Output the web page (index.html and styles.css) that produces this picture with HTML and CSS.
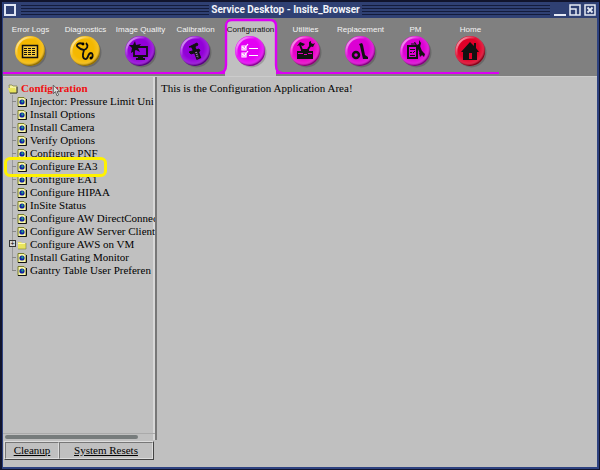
FILE: index.html
```html
<!DOCTYPE html>
<html lang="en">
<head>
<meta charset="utf-8">
<title>Service Desktop - Insite_Browser</title>
<link rel="stylesheet" href="styles.css">
</head>
<body>
<svg class="defs" aria-hidden="true">
  <defs>
    <radialGradient id="shade" cx="45%" cy="42%" r="56%">
      <stop offset="0.6" stop-color="#fff" stop-opacity="0"/>
      <stop offset="0.85" stop-color="#fff" stop-opacity="0.12"/>
      <stop offset="1" stop-color="#000" stop-opacity="0.4"/>
    </radialGradient>
    <linearGradient id="gloss" x1="0" y1="0" x2="0.8" y2="0.8">
      <stop offset="0" stop-color="#fff" stop-opacity="0.9"/>
      <stop offset="0.45" stop-color="#fff" stop-opacity="0"/>
    </linearGradient>
    <g id="ball">
      <circle cx="17.500" cy="17.500" r="15" fill="#000" opacity="0.18"/>
      <circle cx="16" cy="16" r="15" fill="currentColor"/>
      <circle cx="16" cy="16" r="15" fill="url(#shade)"/>
      <circle cx="16" cy="16" r="13.500" fill="none" stroke="url(#gloss)" stroke-width="2"/>
    </g>
    <symbol id="page" viewBox="0 0 10 10">
      <path d="M1 .5h6l2 2v7H1z" fill="#fbf8a8" stroke="#777a2c"/>
      <path d="M9.500 2v7.500H1" fill="none" stroke="#111"/>
      <circle cx="5" cy="5" r="2.600" fill="#1020a0"/>
      <path d="M4 4l2-1 .5 2L5 6z" fill="#1d9f88"/>
    </symbol>
    <symbol id="folder" viewBox="0 0 10 10">
      <path d="M1 2h3l1 1h4v6H1z" fill="#e8e45c"/>
      <path d="M1 3.500h7" stroke="#fffbb0"/>
      <path d="M1 9h8V3" fill="none" stroke="#8a8a45" stroke-width=".7"/>
    </symbol>
    <symbol id="folder-open" viewBox="0 0 10 10">
      <path d="M1 1h3l1 1h4v7H2z" fill="#f6f3a0" stroke="#77773f" stroke-width=".7"/>
      <path d="M0 4h7l2 5H2z" fill="#e8e45c"/>
      <path d="M2 9h7V3" fill="none" stroke="#222" stroke-width=".8"/>
    </symbol>
  </defs>
</svg>

<main class="window">
  <header class="titlebar">
    <button class="menu-box" type="button" aria-label="Window menu"></button>
    <span class="stripes"></span>
    <h1 class="title">Service Desktop - Insite_Browser</h1>
    <span class="stripes"></span>
    <div class="controls">
      <button type="button" aria-label="Minimize"><svg viewBox="0 0 12 12"><path d="M0 11h12" stroke-width="2"/></svg></button>
      <button type="button" aria-label="Maximize"><svg viewBox="0 0 12 12"><path d="M1 1h10v10H1zM1 5h6v6" stroke-width="1.500"/></svg></button>
      <button type="button" aria-label="Close"><svg viewBox="0 0 12 12"><path d="M1 1h10v10H1z" stroke-width="1.500"/><path d="M3.500 3.500l5 5M8.500 3.500l-5 5" stroke-width="1.800"/></svg></button>
    </div>
  </header>

  <nav class="toolbar">
    <a class="tab amber" href="#logs"><span>Error Logs</span>
      <svg viewBox="0 0 33 33"><use href="#ball"/><path d="M8.500 10.500h15v12h-15z" fill="#fff0a8" fill-opacity=".35" stroke="#111" stroke-width="1.500"/><path d="M10 13.500h12M10 15.500h12M10 17.500h12M10 19.500h12" stroke="#111" stroke-dasharray="3 1"/></svg></a>
    <a class="tab amber" href="#diagnostics"><span>Diagnostics</span>
      <svg viewBox="0 0 33 33"><use href="#ball"/><path d="M14 9C10 7 6 10 9 12c2 2 4 3 6 3 3-1 5-4 2-7M15 15c-1 3-2 8 1 9 4 1 2-6 6-6 2 0 2 3 1 5" fill="none" stroke="#111" stroke-width="1.800"/><circle cx="14" cy="9" r="1.400"/><circle cx="22" cy="23" r="1.500"/></svg></a>
    <a class="tab purple" href="#image"><span>Image Quality</span>
      <svg viewBox="0 0 33 33"><use href="#ball"/><path d="M10 12h13v9H10z" fill="none" stroke="#111" stroke-width="1.800"/><path d="M14 21h5v2h2v2h-9v-2h2zM11 6l1 4 5-1-3 4 2 4-4-2-5 3 1-5-3-3h4z" fill="#111"/></svg></a>
    <a class="tab purple" href="#calibration"><span>Calibration</span>
      <svg viewBox="0 0 33 33"><use href="#ball"/><path d="M10 12l8-4 1 2-4 2zM10 17l10-3 1 2-9 3z" fill="#111" stroke="#111"/><path d="M14 11l2 5" stroke="#111" stroke-width="4"/><path d="M17 16l3 8" stroke="#111" stroke-width="5"/><path d="M17 17l2 6" stroke="#9a78b0" stroke-width="2" stroke-dasharray="1 1"/></svg></a>
    <a class="tab active" href="#configuration" aria-current="page">
      <svg class="outline" viewBox="0 0 63 58"><path d="M6 58V8Q7 2 13 2H51Q57 2 57 8V58z" fill="#c0c0c0"/><path d="M0 55Q7 55 7 47V8Q7 2 13 2H51Q57 2 57 8V47Q57 55 63 55" fill="none" stroke="#dc00f4" stroke-width="2.400"/></svg>
      <span>Configuration</span>
      <svg viewBox="0 0 33 33"><use href="#ball"/><path d="M8 11h4v4H8zM8 18h4v4H8zM15 13.500h9M15 20.500h9M9 12l1 2 4-5M9 19l1 2 4-5" fill="none" stroke="#fff" stroke-width="1.200"/></svg></a>
    <a class="tab magenta" href="#utilities"><span>Utilities</span>
      <svg viewBox="0 0 33 33"><use href="#ball"/><path d="M8 16h4v-2h8v2h4v8H8z" fill="#111"/><path d="M9 18.500h5M19 18.500h4M15 19.500h3" stroke="#dc00b8"/><path d="M13 15l-2-5M19 14l3-4" stroke="#111" stroke-width="2"/><path d="M8 11l3-4 5 2-2 2-3-1zM20 7v4l4 1 2-4-2 1-2-1V6z" fill="#111"/></svg></a>
    <a class="tab pink" href="#replacement"><span>Replacement</span>
      <svg viewBox="0 0 33 33"><use href="#ball"/><circle cx="12" cy="20" r="3" fill="none" stroke="#111" stroke-width="2.500"/><path d="M15 9l3-1 1 2 2 10 3 2v2h-5l-3-13z" fill="#111"/></svg></a>
    <a class="tab pink" href="#pm"><span>PM</span>
      <svg viewBox="0 0 33 33"><use href="#ball"/><path d="M9 11h9v12H9z" fill="none" stroke="#111" stroke-width="2"/><path d="M11 14.500h5M11 17.500h2M14 18l2-2M11 20.500h5M12 9h4" stroke="#111"/><path d="M19 10l4 10" stroke="#111" stroke-width="3"/><path d="M15 7l2 4 4 1 1-4-2-3v4l-2 1-2-3zM20 18l1 4 2-2 2 2 1-3-3-3z" fill="#111"/></svg></a>
    <a class="tab red" href="#home"><span>Home</span>
      <svg viewBox="0 0 33 33"><use href="#ball"/><path d="M16 7l4 4V8h2v5l3 4h-2v8H9v-8H7z" fill="#111"/><path d="M15 18h3v6h-3z" fill="#e00028"/></svg></a>
  </nav>

  <div class="workspace">
    <aside class="sidebar">
      <div class="tree-pane">
        <div class="tree-root"><svg><use href="#folder-open"/></svg><strong>Configuration</strong>
          <svg class="cursor" viewBox="0 0 8 12"><path d="M1 1v8l2-2 1.500 4 1.500-1-1.500-3H7z" fill="#ddd" stroke="#555" stroke-width=".8"/></svg></div>
        <ul class="tree">
          <li><svg><use href="#page"/></svg><a href="#i">Injector: Pressure Limit Uni</a></li>
          <li><svg><use href="#page"/></svg><a href="#i">Install Options</a></li>
          <li><svg><use href="#page"/></svg><a href="#i">Install Camera</a></li>
          <li><svg><use href="#page"/></svg><a href="#i">Verify Options</a></li>
          <li><svg><use href="#page"/></svg><a href="#i">Configure PNF</a></li>
          <li class="marked"><svg><use href="#page"/></svg><a href="#i">Configure EA3</a></li>
          <li><svg><use href="#page"/></svg><a href="#i">Configure EA1</a></li>
          <li><svg><use href="#page"/></svg><a href="#i">Configure HIPAA</a></li>
          <li><svg><use href="#page"/></svg><a href="#i">InSite Status</a></li>
          <li><svg><use href="#page"/></svg><a href="#i">Configure AW DirectConnec</a></li>
          <li><svg><use href="#page"/></svg><a href="#i">Configure AW Server Client</a></li>
          <li class="branch"><svg><use href="#folder"/></svg><a href="#i">Configure AWS on VM</a></li>
          <li><svg><use href="#page"/></svg><a href="#i">Install Gating Monitor</a></li>
          <li><svg><use href="#page"/></svg><a href="#i">Gantry Table User Preferen</a></li>
        </ul>
        <div class="scrollbar"><span></span></div>
      </div>
      <div class="actions">
        <button type="button">Cleanup</button>
        <button type="button">System Resets</button>
      </div>
    </aside>
    <section class="content">This is the Configuration Application Area!</section>
  </div>
</main>
</body>
</html>
```

FILE: styles.css
```css
*, *::before, *::after { box-sizing: border-box; }

body {
  margin: 0;
  height: 100vh;
  padding: 2px 1px 1px 2px;
  background: #11142c;
  font: 11px/13px "Roboto Slab", "Liberation Serif", serif;
  color: #000;
}

button { margin: 0; padding: 0; border: 0; background: none; font: inherit; color: inherit; }
a { color: inherit; text-decoration: none; }
.defs { position: absolute; width: 0; height: 0; }

.window {
  display: flex;
  flex-direction: column;
  height: 100%;
  border: 1px solid #2e4280;
  border-width: 0 2px 2px 1px;
  background: #c0c0c0;
}

.titlebar {
  display: flex;
  align-items: center;
  gap: 2px;
  height: 16px;
  padding: 0 0 0 1px;
  background: #2f4073;
  color: #f2f4fa;
}
.menu-box { width: 12px; height: 12px; margin-right: 3px; border: 2px solid #dfe5f3; }
.stripes {
  flex: 1;
  height: 11px;
  background: repeating-linear-gradient(#141c3c 0 1px, #2f4073 1px 3px);
}
.title { margin: 0; font: bold 10px/16px Roboto, sans-serif; }
.controls { display: flex; gap: 3px; padding: 0 1px 0 2px; }
.controls button { width: 12px; height: 12px; }
.controls svg { display: block; width: 12px; height: 12px; fill: none; stroke: #e6eaf5; }

.toolbar {
  display: flex;
  height: 59px;
  background: linear-gradient(#dc00f4, #dc00f4) 0 54px / 496px 2px no-repeat, #808080;
  border-bottom: 1px solid #ccc;
}
.tab {
  position: relative;
  display: flex;
  flex-direction: column;
  align-items: center;
  width: 55px;
  padding-top: 6px;
  color: #f4f4f4;
  font: 8px/11px "Liberation Sans", sans-serif;
  white-space: nowrap;
}
.tab span { position: relative; }
.tab svg { width: 33px; height: 33px; position: relative; }
.tab use { color: #f4b800; }
.purple use { color: #9200d8; }
.active use { color: #e400f4; }
.magenta use { color: #e800c8; }
.pink use { color: #dc00d4; }
.red use { color: #e00028; }
.active { color: #111; }
.tab .outline { position: absolute; left: -4px; top: 0; width: 63px; height: 58px; }

.workspace { flex: 1; display: flex; min-height: 0; }
.sidebar { display: flex; flex-direction: column; width: 154px; }
.tree-pane {
  flex: 1;
  display: flex;
  flex-direction: column;
  overflow: hidden;
  padding-top: 5px;
  border-right: 2px solid #777;
  box-shadow: inset -2px 0 #d8d8d8;
}
.tree-root {
  position: relative;
  display: flex;
  align-items: center;
  gap: 3px;
  padding-left: 5px;
  color: #f01010;
}
.tree-root svg { width: 10px; height: 10px; }
.tree-root .cursor { position: absolute; left: 49px; top: 2px; width: 9px; height: 13px; }
.tree { flex: 1; margin: 0 0 0 9px; padding: 0; list-style: none; }
.tree li {
  position: relative;
  display: flex;
  align-items: center;
  gap: 3px;
  height: 13px;
  padding-left: 5px;
  white-space: nowrap;
  background:
    linear-gradient(#888, #888) 0 6px / 4px 1px no-repeat,
    linear-gradient(#999, #999) 0 0 / 1px 100% no-repeat;
}
.tree li:last-child {
  background:
    linear-gradient(#888, #888) 0 6px / 4px 1px no-repeat,
    linear-gradient(#999, #999) 0 0 / 1px 6px no-repeat;
}
.tree svg { flex: none; width: 10px; height: 10px; }
.marked::after {
  content: "";
  position: absolute;
  z-index: 1;
  left: -8px;
  top: -3px;
  width: 103px;
  height: 20px;
  border: 3px solid #fff200;
  border-radius: 6px;
}
.branch::before {
  content: "+";
  position: absolute;
  left: -3px;
  top: 2px;
  width: 7px;
  height: 7px;
  border: 1px solid #333;
  background: #d8d8d8;
  font: 7px/5px "Liberation Sans", sans-serif;
  text-align: center;
}

.scrollbar { padding: 1px 2px; border-top: 1px solid #aaa; }
.scrollbar span { display: block; width: 90%; height: 4px; border-radius: 2px; background: #777c7c; }

.actions {
  display: grid;
  grid-template-columns: 54px 1fr;
  margin: 1px 3px 7px 1px;
  border: 1px solid #ddd;
  border-right-color: #444;
  border-bottom-color: #444;
}
.actions button {
  height: 17px;
  border: 1px solid #777;
  border-right-color: #ddd;
  border-bottom-color: #ddd;
  text-decoration: underline;
}

.content { flex: 1; padding: 5px 4px; }
```
